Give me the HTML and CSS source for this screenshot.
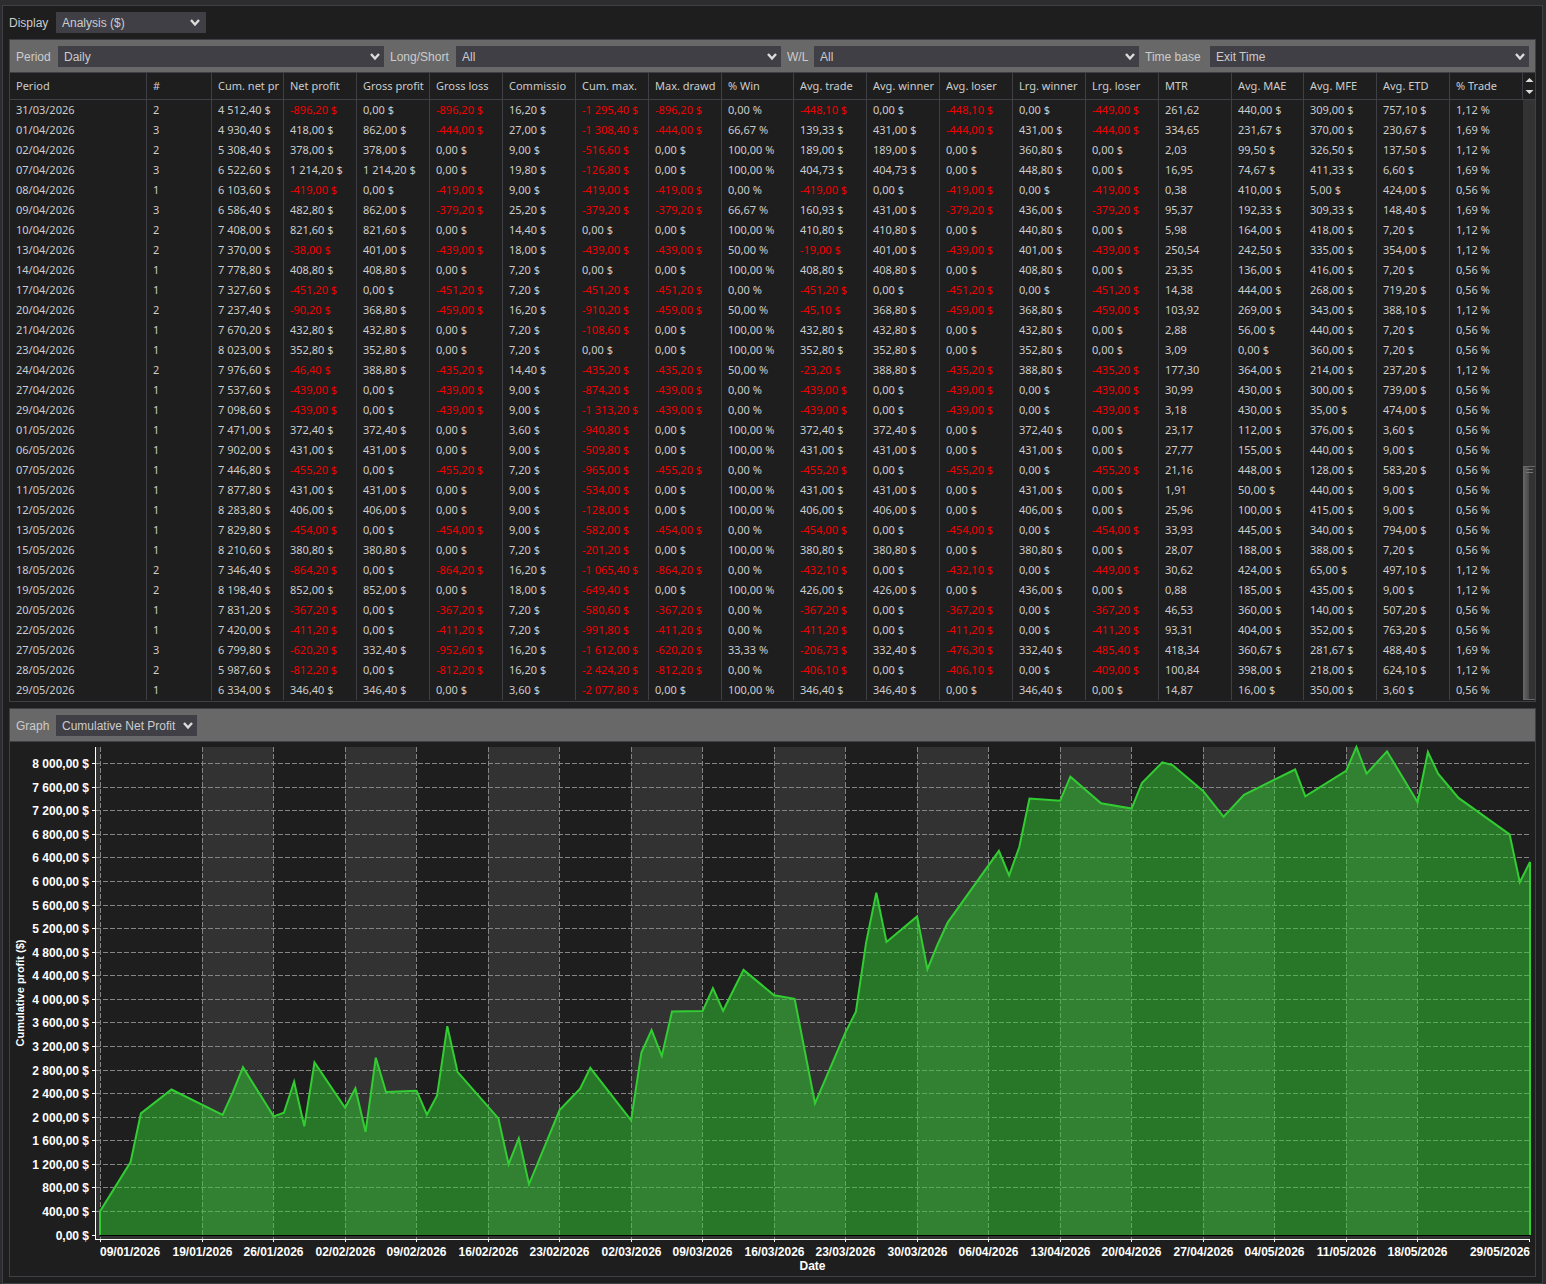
FILE: index.html
```html
<!DOCTYPE html>
<html lang="en">
<head>
<meta charset="utf-8">
<title>Trade Performance</title>
<link rel="stylesheet" href="styles.css">
</head>
<body>
<main class="window">
  <form class="display-bar">
    <label for="display">Display</label>
    <select id="display" class="select select-display"><option>Analysis ($)</option></select>
  </form>

  <section class="panel">
    <form class="toolbar filters">
      <label for="period">Period</label>
      <select id="period" class="select"><option>Daily</option></select>
      <label for="side">Long/Short</label>
      <select id="side" class="select"><option>All</option></select>
      <label for="wl">W/L</label>
      <select id="wl" class="select"><option>All</option></select>
      <label for="timebase">Time base</label>
      <select id="timebase" class="select"><option>Exit Time</option></select>
    </form>
    <div class="grid">
      <table class="data">
        <colgroup>
          <col class="c-period"><col class="c-count"><col class="c-narrow"><col><col><col><col><col><col>
          <col class="c-narrow"><col><col><col><col><col><col><col class="c-narrow"><col><col><col>
        </colgroup>
        <thead>
          <tr>
            <th>Period</th><th>#</th><th title="Cum. net profit">Cum. net pr</th><th>Net profit</th><th>Gross profit</th>
            <th>Gross loss</th><th title="Commission">Commissio</th><th title="Cum. max. drawdown">Cum. max.</th><th title="Max. drawdown">Max. drawd</th><th>% Win</th>
            <th>Avg. trade</th><th>Avg. winner</th><th>Avg. loser</th><th>Lrg. winner</th><th>Lrg. loser</th>
            <th>MTR</th><th>Avg. MAE</th><th>Avg. MFE</th><th>Avg. ETD</th><th>% Trade</th>
          </tr>
        </thead>
        <tbody id="rows"></tbody>
      </table>
      <div class="scrollbar">
        <div class="arrows">
          <svg width="9" height="18" viewBox="0 0 9 18" aria-hidden="true"><path d="M0.500 5h8L4.500 1zM0.500 13h8L4.500 17z" fill="#dcdcdc"/></svg>
        </div>
        <div class="track"><div class="thumb"><i></i><i></i></div></div>
      </div>
    </div>
  </section>

  <section class="panel graph">
    <form class="toolbar">
      <label for="graph">Graph</label>
      <select id="graph" class="select select-graph"><option>Cumulative Net Profit</option></select>
    </form>
    <div class="plot"><svg id="chart" class="chart" role="img" aria-label="Cumulative net profit by date"></svg></div>
  </section>
</main>
<script src="app.js"></script>
</body>
</html>
```
FILE: styles.css
```css
* { box-sizing: border-box; }

body {
  margin: 0;
  padding: 5px 3px 0 2px;
  min-height: 100vh;
  display: flex;
  background: #2d2d30;
  color: #cccccc;
  font: 12px/16px "Liberation Sans", Arial, sans-serif;
}

.window {
  flex: 1;
  min-width: 0;
  display: flex;
  flex-direction: column;
  gap: 6px;
  padding: 6px;
  background: #1e1e1e;
  border: 1px solid #3f3f46;
}

.display-bar { display: flex; align-items: center; gap: 6px; height: 21px; }
.display-bar label { width: 41px; }

.select {
  appearance: none;
  height: 21px;
  min-width: 0;
  width: 100%;
  margin: 0;
  padding: 0 20px 0 6px;
  border: 0;
  border-radius: 0;
  color: #cccccc;
  font: inherit;
  background: #403f46 url("data:image/svg+xml,%3Csvg xmlns='http://www.w3.org/2000/svg' width='10' height='8'%3E%3Cpath d='M1 1L5 5.500L9 1' fill='none' stroke='%23dcdcdc' stroke-width='2.400'/%3E%3C/svg%3E") no-repeat right 4px center;
}
.select-display { width: 150px; background-position: right 6px center; }
.select-graph { width: 141px; }

.panel { border: 1px solid #3f3f46; }

.toolbar {
  display: flex;
  align-items: center;
  gap: 6px;
  padding: 6px 6px 5px;
  background: #686868;
  border-bottom: 1px solid #3f3f46;
}
.filters {
  display: grid;
  grid-template-columns: 36px 326fr 60px 325fr 21px 325fr 59px 319fr;
}
.graph .toolbar label { width: 34px; }

.grid { display: flex; padding-bottom: 1px; }

.data {
  flex: 1;
  width: 100%;
  min-width: 0;
  table-layout: fixed;
  border-collapse: separate;
  border-spacing: 0;
  font: 11px/16px "Noto Sans", "Open Sans", sans-serif;
}
.data col { width: 73px; }
.data .c-period { width: 137px; }
.data .c-count { width: 65px; }
.data .c-narrow { width: 72px; }

.data th,
.data td {
  padding: 2px 2px 2px 6px;
  overflow: hidden;
  white-space: nowrap;
  text-align: left;
  border-right: 1px solid #3f3f46;
}
.data th {
  height: 27px;
  font-weight: 400;
  border-bottom: 1px solid #3f3f46;
}
.data td { height: 20px; }
.data td:last-child { border-right: 0; }
.data .neg { color: #f00000; }

.scrollbar { flex: none; width: 12px; display: flex; flex-direction: column; }
.arrows {
  height: 27px;
  display: flex;
  align-items: center;
  justify-content: center;
  border-bottom: 1px solid #3f3f46;
}
.track { flex: 1; display: flex; flex-direction: column; justify-content: flex-end; background: #333333; }
.thumb {
  height: 39%;
  display: flex;
  flex-direction: column;
  gap: 2px;
  padding: 2px 2px 0 3px;
  background: linear-gradient(90deg, #686868, #484848 6px, #333333 6px);
  border-top: 1px solid #686868;
  border-bottom: 1px solid #686868;
}
.thumb i { height: 1px; background: #777777; }

.graph { flex: 1; display: flex; flex-direction: column; }
.plot { flex: 1; display: flex; min-height: 300px; }
.chart { display: block; flex: 1; width: 100%; min-width: 0; }

.chart text { fill: #ffffff; font-weight: 700; font-size: 12px; }
.chart .y-title { font-size: 11px; }
.chart .band { fill: #323232; }
.chart .gridline { stroke: #848484; stroke-dasharray: 5 2; }
.chart .axis { stroke: #ffffff; }
.chart .base { stroke: #000000; }
.chart .area { fill: #32cd32; fill-opacity: 0.5; stroke: #32cd32; stroke-width: 2; }
```
FILE: app.js
```js
// date | trades | cum net | net | gross profit | gross loss | commission | cum max dd | max dd | % win |
// avg trade | avg winner | avg loser | lrg winner | lrg loser | MTR | MAE | MFE | ETD | % trade
const days = `
31/03/2026|2|4 512,40|-896,20|0,00|-896,20|16,20|-1 295,40|-896,20|0,00|-448,10|0,00|-448,10|0,00|-449,00|261,62|440,00|309,00|757,10|1,12
01/04/2026|3|4 930,40|418,00|862,00|-444,00|27,00|-1 308,40|-444,00|66,67|139,33|431,00|-444,00|431,00|-444,00|334,65|231,67|370,00|230,67|1,69
02/04/2026|2|5 308,40|378,00|378,00|0,00|9,00|-516,60|0,00|100,00|189,00|189,00|0,00|360,80|0,00|2,03|99,50|326,50|137,50|1,12
07/04/2026|3|6 522,60|1 214,20|1 214,20|0,00|19,80|-126,80|0,00|100,00|404,73|404,73|0,00|448,80|0,00|16,95|74,67|411,33|6,60|1,69
08/04/2026|1|6 103,60|-419,00|0,00|-419,00|9,00|-419,00|-419,00|0,00|-419,00|0,00|-419,00|0,00|-419,00|0,38|410,00|5,00|424,00|0,56
09/04/2026|3|6 586,40|482,80|862,00|-379,20|25,20|-379,20|-379,20|66,67|160,93|431,00|-379,20|436,00|-379,20|95,37|192,33|309,33|148,40|1,69
10/04/2026|2|7 408,00|821,60|821,60|0,00|14,40|0,00|0,00|100,00|410,80|410,80|0,00|440,80|0,00|5,98|164,00|418,00|7,20|1,12
13/04/2026|2|7 370,00|-38,00|401,00|-439,00|18,00|-439,00|-439,00|50,00|-19,00|401,00|-439,00|401,00|-439,00|250,54|242,50|335,00|354,00|1,12
14/04/2026|1|7 778,80|408,80|408,80|0,00|7,20|0,00|0,00|100,00|408,80|408,80|0,00|408,80|0,00|23,35|136,00|416,00|7,20|0,56
17/04/2026|1|7 327,60|-451,20|0,00|-451,20|7,20|-451,20|-451,20|0,00|-451,20|0,00|-451,20|0,00|-451,20|14,38|444,00|268,00|719,20|0,56
20/04/2026|2|7 237,40|-90,20|368,80|-459,00|16,20|-910,20|-459,00|50,00|-45,10|368,80|-459,00|368,80|-459,00|103,92|269,00|343,00|388,10|1,12
21/04/2026|1|7 670,20|432,80|432,80|0,00|7,20|-108,60|0,00|100,00|432,80|432,80|0,00|432,80|0,00|2,88|56,00|440,00|7,20|0,56
23/04/2026|1|8 023,00|352,80|352,80|0,00|7,20|0,00|0,00|100,00|352,80|352,80|0,00|352,80|0,00|3,09|0,00|360,00|7,20|0,56
24/04/2026|2|7 976,60|-46,40|388,80|-435,20|14,40|-435,20|-435,20|50,00|-23,20|388,80|-435,20|388,80|-435,20|177,30|364,00|214,00|237,20|1,12
27/04/2026|1|7 537,60|-439,00|0,00|-439,00|9,00|-874,20|-439,00|0,00|-439,00|0,00|-439,00|0,00|-439,00|30,99|430,00|300,00|739,00|0,56
29/04/2026|1|7 098,60|-439,00|0,00|-439,00|9,00|-1 313,20|-439,00|0,00|-439,00|0,00|-439,00|0,00|-439,00|3,18|430,00|35,00|474,00|0,56
01/05/2026|1|7 471,00|372,40|372,40|0,00|3,60|-940,80|0,00|100,00|372,40|372,40|0,00|372,40|0,00|23,17|112,00|376,00|3,60|0,56
06/05/2026|1|7 902,00|431,00|431,00|0,00|9,00|-509,80|0,00|100,00|431,00|431,00|0,00|431,00|0,00|27,77|155,00|440,00|9,00|0,56
07/05/2026|1|7 446,80|-455,20|0,00|-455,20|7,20|-965,00|-455,20|0,00|-455,20|0,00|-455,20|0,00|-455,20|21,16|448,00|128,00|583,20|0,56
11/05/2026|1|7 877,80|431,00|431,00|0,00|9,00|-534,00|0,00|100,00|431,00|431,00|0,00|431,00|0,00|1,91|50,00|440,00|9,00|0,56
12/05/2026|1|8 283,80|406,00|406,00|0,00|9,00|-128,00|0,00|100,00|406,00|406,00|0,00|406,00|0,00|25,96|100,00|415,00|9,00|0,56
13/05/2026|1|7 829,80|-454,00|0,00|-454,00|9,00|-582,00|-454,00|0,00|-454,00|0,00|-454,00|0,00|-454,00|33,93|445,00|340,00|794,00|0,56
15/05/2026|1|8 210,60|380,80|380,80|0,00|7,20|-201,20|0,00|100,00|380,80|380,80|0,00|380,80|0,00|28,07|188,00|388,00|7,20|0,56
18/05/2026|2|7 346,40|-864,20|0,00|-864,20|16,20|-1 065,40|-864,20|0,00|-432,10|0,00|-432,10|0,00|-449,00|30,62|424,00|65,00|497,10|1,12
19/05/2026|2|8 198,40|852,00|852,00|0,00|18,00|-649,40|0,00|100,00|426,00|426,00|0,00|436,00|0,00|0,88|185,00|435,00|9,00|1,12
20/05/2026|1|7 831,20|-367,20|0,00|-367,20|7,20|-580,60|-367,20|0,00|-367,20|0,00|-367,20|0,00|-367,20|46,53|360,00|140,00|507,20|0,56
22/05/2026|1|7 420,00|-411,20|0,00|-411,20|7,20|-991,80|-411,20|0,00|-411,20|0,00|-411,20|0,00|-411,20|93,31|404,00|352,00|763,20|0,56
27/05/2026|3|6 799,80|-620,20|332,40|-952,60|16,20|-1 612,00|-620,20|33,33|-206,73|332,40|-476,30|332,40|-485,40|418,34|360,67|281,67|488,40|1,69
28/05/2026|2|5 987,60|-812,20|0,00|-812,20|16,20|-2 424,20|-812,20|0,00|-406,10|0,00|-406,10|0,00|-409,00|100,84|398,00|218,00|624,10|1,12
29/05/2026|1|6 334,00|346,40|346,40|0,00|3,60|-2 077,80|0,00|100,00|346,40|346,40|0,00|346,40|0,00|14,87|16,00|350,00|3,60|0,56
`.trim().split("\n").map((line) => line.split("|"));

const PLAIN = new Set([0, 1, 15]);
const PERCENT = new Set([9, 19]);

const body = document.getElementById("rows");
for (const day of days) {
  const tr = body.insertRow();
  day.forEach((value, i) => {
    const td = tr.insertCell();
    td.textContent = PLAIN.has(i) ? value : value + (PERCENT.has(i) ? " %" : " $");
    if (value.startsWith("-")) td.className = "neg";
  });
}

// Cumulative profit before the first listed row: [days since 09/01, value]
const earlier = [
  [0, 400], [3, 1240], [4, 2065], [7, 2470], [12, 2037], [13, 2420], [14, 2850], [17, 2014], [18, 2076],
  [19, 2602], [20, 1845], [21, 2929], [24, 2160], [25, 2488], [26, 1750], [27, 3010], [28, 2427],
  [31, 2449], [32, 2042], [33, 2370], [34, 3546], [35, 2771], [39, 1980], [40, 1200], [41, 1641],
  [42, 860], [45, 2122], [47, 2483], [48, 2839], [52, 1945], [53, 3098], [54, 3478], [55, 3038],
  [56, 3793], [59, 3800], [60, 4190], [61, 3805], [63, 4500], [66, 4071], [68, 4010], [70, 2235],
  [73, 3444], [74, 3793], [75, 4963], [76, 5810], [77, 4975], [80, 5408.6],
];

const dayIndex = (text) => {
  const [d, m, y] = text.split("/").map(Number);
  return Math.round((Date.UTC(y, m - 1, d) - Date.UTC(2026, 0, 9)) / 86400000);
};
const dateText = (n) => {
  const t = new Date(Date.UTC(2026, 0, 9 + n));
  return [t.getUTCDate(), t.getUTCMonth() + 1].map((v) => String(v).padStart(2, "0")).join("/") + "/" + t.getUTCFullYear();
};
const money = (v) => String(v).replace(/\B(?=(\d{3})+$)/g, " ") + ",00 $";

const points = earlier.concat(
  days.map((d) => [dayIndex(d[0]), parseFloat(d[2].replace(/\s/g, "").replace(",", "."))])
);
const LAST = 140;
const MAX = 8283.8;

function draw() {
  const svg = document.getElementById("chart");
  const { width, height } = svg.getBoundingClientRect();
  const axisX = 85, left = 90, right = width - 5, top = 5, base = height - 41, axisY = height - 37;
  const x = (d) => left + (d / LAST) * (right - left);
  const y = (v) => base - (v / MAX) * (base - top);
  const snap = (v) => Math.floor(v) + 0.5;
  const line = (cls, x1, y1, x2, y2) => `<line class="${cls}" x1="${x1}" y1="${y1}" x2="${x2}" y2="${y2}"/>`;
  const rect = (x1, y1, x2, y2) => `<rect class="band" x="${x1}" y="${y1}" width="${x2 - x1}" height="${y2 - y1}"/>`;
  const text = (tx, ty, anchor, s, more = "") => `<text x="${tx}" y="${ty}" text-anchor="${anchor}"${more}>${s}</text>`;

  const weeks = [0];
  for (let d = 10; d <= 129; d += 7) weeks.push(d);
  let out = "";

  out += rect(axisX + 1, top, left, axisY) + rect(left, base, right, axisY);
  for (let i = 1; i < weeks.length - 1; i += 2) out += rect(Math.floor(x(weeks[i])), top, Math.floor(x(weeks[i + 1])), axisY);

  for (let v = 0; v <= 8000; v += 400) {
    const gy = snap(y(v));
    if (v > 0) out += line("gridline", axisX + 1, gy, right, gy);
    out += line("axis", axisX - 3, gy, axisX, gy);
    out += text(axisX - 6, gy + 4, "end", money(v));
  }
  for (const d of weeks) {
    const gx = snap(x(d));
    out += line("gridline", gx, top, gx, axisY);
    out += line("axis", gx, axisY, gx, axisY + 3);
    out += text(d ? gx : left, axisY + 17, d ? "middle" : "start", dateText(d));
  }
  out += line("axis", snap(right - 1), axisY, snap(right - 1), axisY + 3);
  out += text(right, axisY + 17, "end", dateText(LAST));

  const path = points.map(([d, v]) => `${x(d).toFixed(1)} ${y(v).toFixed(1)}`).join("L");
  out += `<path class="area" d="M${left} ${base}L${path}L${right} ${base}"/>`;
  out += line("base", left, base + 0.5, right, base + 0.5);
  out += line("axis", axisX + 0.5, top, axisX + 0.5, axisY);
  out += line("axis", axisX, axisY + 0.5, right, axisY + 0.5);

  out += text((axisX + right) / 2, height - 6, "middle", "Date");
  const mid = (top + axisY) / 2;
  out += text(14, mid, "middle", "Cumulative profit ($)", ` class="y-title" transform="rotate(-90 14 ${mid})"`);
  svg.innerHTML = out;
}

draw();
window.addEventListener("resize", draw);
```
